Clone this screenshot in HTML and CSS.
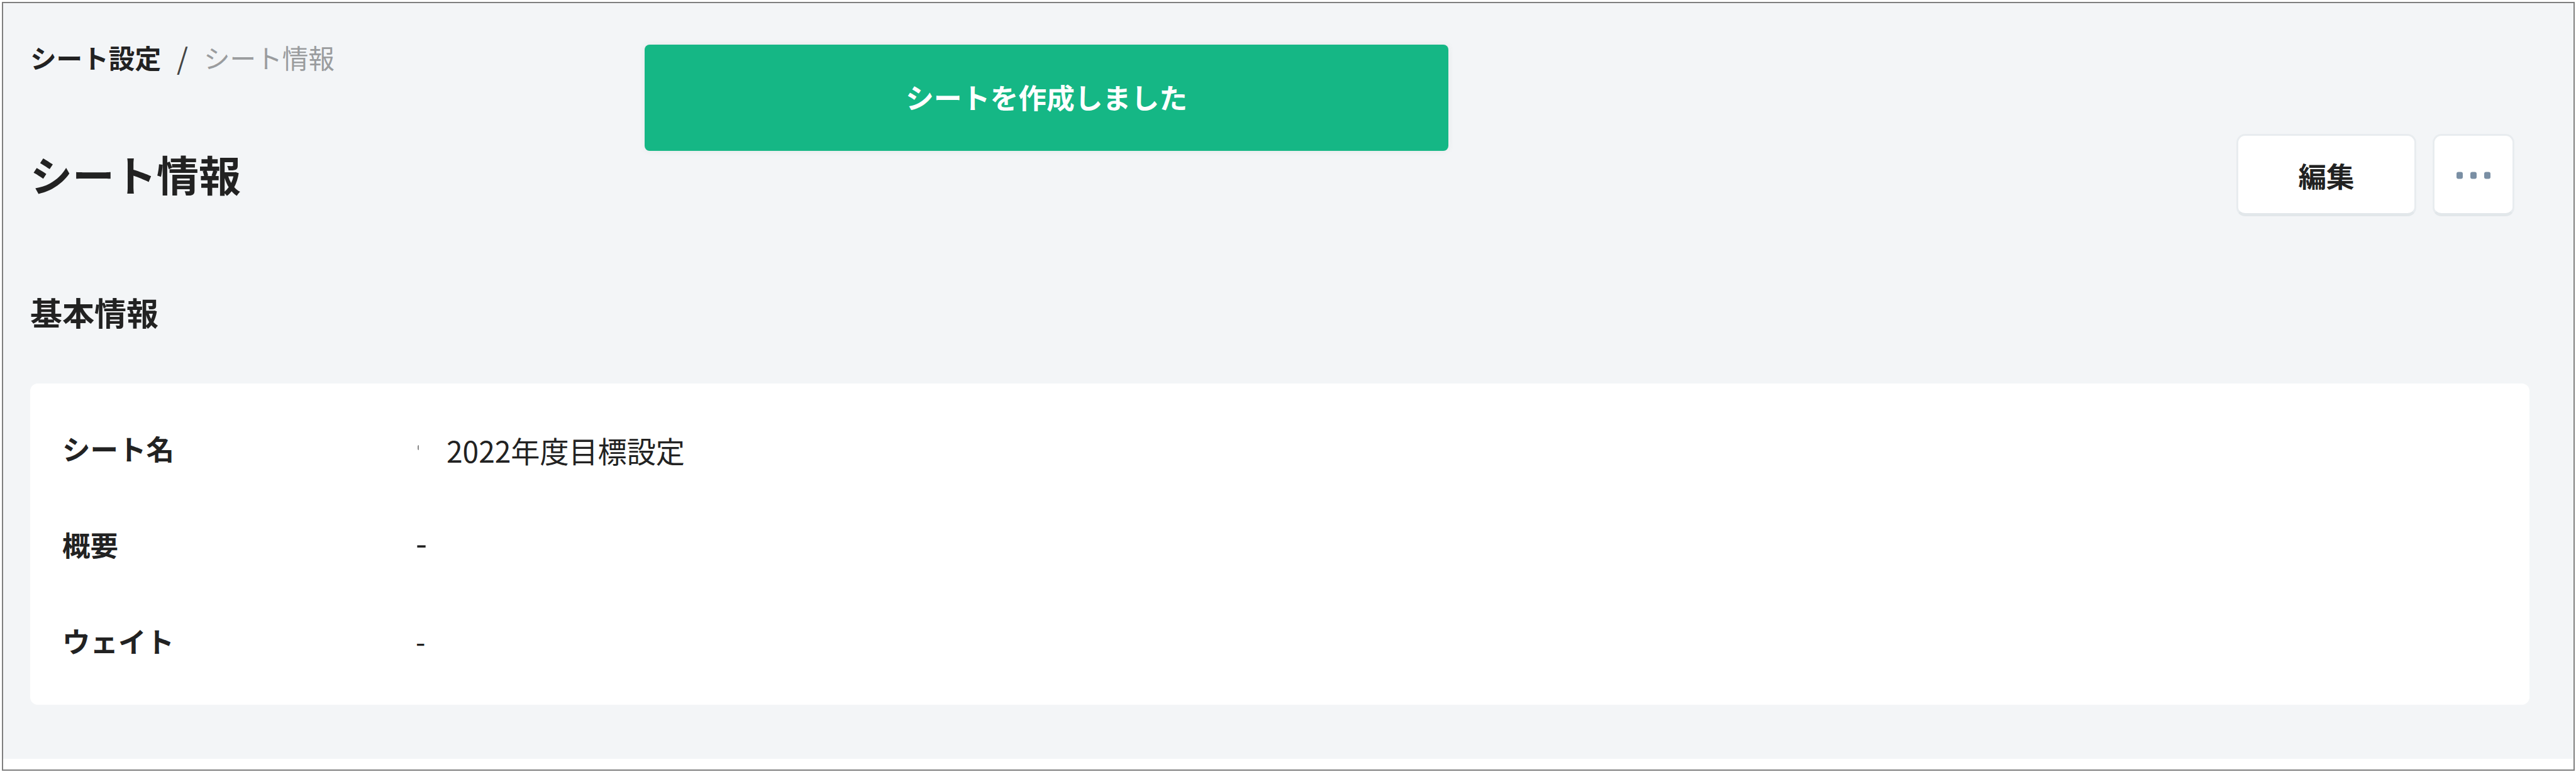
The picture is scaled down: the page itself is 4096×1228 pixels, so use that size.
FILE: index.html
```html
<!DOCTYPE html>
<html lang="ja">
<head>
  <meta charset="UTF-8" />
  <title>シート情報</title>
  <link rel="stylesheet" href="styles.css">
</head>
<body>

<div class="frame">
  <div class="toast">シートを作成しました</div>

  <main class="page">
    <nav class="breadcrumb">
      <a class="crumb">シート設定</a>
      <span class="slash">/</span>
      <span class="current">シート情報</span>
    </nav>

    <div class="header">
      <h1>シート情報</h1>
      <div class="actions">
        <button class="btn edit">編集</button>
        <button class="btn more">
          <svg width="54" height="12" viewBox="0 0 54 12" fill="#7a8fa4">
            <rect x="0" y="0.5" width="10" height="11" rx="3" />
            <rect x="22" y="0.5" width="10" height="11" rx="3" />
            <rect x="44" y="0.5" width="10" height="11" rx="3" />
          </svg>
        </button>
      </div>
    </div>

    <h2>基本情報</h2>

    <div class="card">
      <div class="row">
        <div class="label">シート名</div>
        <div class="value"><span class="tick"></span><span class="name">2022年度目標設定</span></div>
      </div>
      <div class="row">
        <div class="label">概要</div>
        <div class="value summary">-</div>
      </div>
      <div class="row">
        <div class="label">ウェイト</div>
        <div class="value">-</div>
      </div>
    </div>
  </main>
</div>

</body>
</html>
```
FILE: styles.css
```css
* { box-sizing: border-box; }
body { margin: 0; padding: 3px; background: #fff; color: #222; font-family: "Noto Sans CJK JP", sans-serif; overflow: hidden; }
.frame { position: relative; width: 4091px; height: 1223px; border: 2px solid #7f7f7f; background: #fff; }
.page { height: 1202px; padding: 56px 70px 0 43px; background: #f3f5f7; }

.toast { position: absolute; left: 1020px; top: 66px; width: 1278px; height: 169px; border-radius: 8px; background: #15b785; color: #fff; font-size: 44.8px; font-weight: bold; line-height: 165px; text-align: center; box-shadow: 0 0 12px rgba(0,0,0,0.06); }

.breadcrumb { display: flex; height: 60px; font-size: 41.6px; line-height: 60px; }
.crumb { font-weight: bold; }
.slash { width: 68px; text-align: center; color: #444; font-size: 46px; }
.current { color: #9a9c9e; }

.header { display: flex; justify-content: space-between; align-items: center; height: 131px; margin-top: 92px; padding-right: 24px; }
h1 { margin: 0 0 6px; font-size: 67px; line-height: 90px; }
.actions { display: flex; gap: 26px; }
.btn { display: flex; align-items: center; justify-content: center; height: 131px; padding: 2px 0 0; border: 3px solid #e8ecef; border-bottom: 5px solid #e2e7ea; border-radius: 14px; background: #fff; color: #222; font-family: inherit; font-size: 44.5px; font-weight: bold; }
.edit { width: 286px; }
.more { width: 130px; }

h2 { margin: 122px 0 84px; font-size: 51px; line-height: 60px; }

.card { height: 511px; padding: 26px 52px 0; border-radius: 12px; background: #fff; }
.row { display: flex; align-items: center; height: 153px; font-size: 44.5px; line-height: 60px; }
.label { width: 562px; margin-left: -1px; font-weight: bold; }
.value { display: flex; align-items: center; }
.tick { width: 2px; height: 8px; margin: 0 0 2px 3px; border-radius: 2px 0 0 2px; background: #888; }
.name { margin: 6px 0 0 44px; font-size: 46.1px; }
.summary { padding-bottom: 8px; font-size: 52px; }
```
